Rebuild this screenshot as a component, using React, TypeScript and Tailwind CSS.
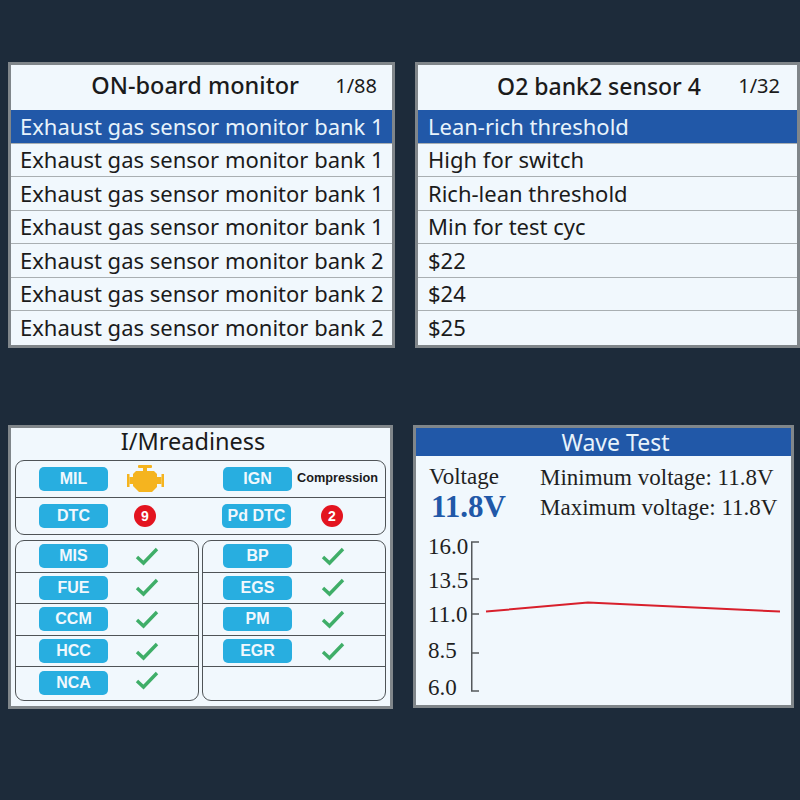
const monitorRows = ["Exhaust gas sensor monitor bank 1", "Exhaust gas sensor monitor bank 1", "Exhaust gas sensor monitor bank 1", "Exhaust gas sensor monitor bank 1", "Exhaust gas sensor monitor bank 2", "Exhaust gas sensor monitor bank 2", "Exhaust gas sensor monitor bank 2"];
const sensorRows = ["Lean-rich threshold", "High for switch", "Rich-lean threshold", "Min for test cyc", "$22", "$24", "$25"];
const leftChecks = ["MIS", "FUE", "CCM", "HCC", "NCA"];
const rightChecks = ["BP", "EGS", "PM", "EGR"];

// Axis labels aren't evenly spaced in the picture
const axisLabels = [
    { text: "16.0", height: "h-[33.5px]" },
    { text: "13.5", height: "h-[34.5px]" },
    { text: "11.0", height: "h-[36px]" },
    { text: "8.5", height: "h-[37px]" },
    { text: "6.0", height: "h-[23px]" },
];

type ListProps = {
    title: string,
    page: string,
    rows: string[],
    width: string,
    titleClass: string,
    pageClass: string,
    rowPad: string,
}

function ListPanel({ title, page, rows, width, titleClass, pageClass, rowPad }: ListProps) {
    return (
        <div className={`${width} h-[286px] shrink-0 border-[3px] border-[#80868a] bg-[#f1f8fd] text-[#1b1b1b]`}>
            <div className="h-[45px] pb-[3px] flex items-center">
                <div className={`${titleClass} text-right font-medium leading-none`}>{title}</div>
                <div className={`${pageClass} flex-1 text-right text-[20px] leading-none`}>{page}</div>
            </div>
            {rows.map((row, i) => (
                <div
                    key={i}
                    className={`${rowPad} h-[33.5px] pb-[1px] flex items-center text-[22px] leading-none whitespace-nowrap border-b border-[#a9afb2] last:border-b-0 ${i === 0 ? "bg-[#2158a8] text-[#e8f3fb]" : ""}`}
                >
                    {row}
                </div>
            ))}
        </div>
    )
}

function Pill({ label }: { label: string }) {
    return (
        <div className="w-[69px] h-[24px] shrink-0 rounded-[5px] bg-[#28aee0] text-[#f1f8fd] text-[16px] font-bold leading-none flex items-center justify-center font-['Liberation_Sans',sans-serif]">
            {label}
        </div>
    )
}

function Check() {
    return (
        <svg width="24" height="19" viewBox="0 0 24 19" className="shrink-0">
            <path d="M2 10 L8.5 16 L22 2" fill="none" stroke="#3fae68" strokeWidth="3.4" />
        </svg>
    )
}

function Engine() {
    return (
        <svg width="37" height="28" viewBox="0 0 37 28" fill="#f5b41f" className="shrink-0">
            <rect x="11" y="0" width="14" height="3" rx="1" />
            <rect x="16" y="3" width="4" height="4" />
            <path d="M9 6 H27 L30 9 V22 L25 27 H12 L6 21 V9 Z" />
            <rect x="0" y="9" width="2.5" height="13" />
            <rect x="2.5" y="12" width="4" height="7" />
            <rect x="30" y="12" width="4.5" height="7" />
            <rect x="34.5" y="9" width="2.5" height="13" />
        </svg>
    )
}

function Badge({ value }: { value: string }) {
    return (
        <div className="w-[22px] h-[22px] rounded-full bg-[#e3141f] text-white text-[14px] font-bold leading-none flex items-center justify-center font-['Liberation_Sans',sans-serif]">
            {value}
        </div>
    )
}

function CheckTable({ items, pad, gap }: { items: string[], pad: string, gap: string }) {
    return (
        <div className="w-[184px] h-[161px] rounded-[9px] border border-[#4f5457]">
            {[0, 1, 2, 3, 4].map((i) => (
                <div key={i} className={`${pad} h-[31.6px] flex items-center border-b border-[#4f5457] last:border-b-0`}>
                    {items[i] && <Pill label={items[i]} />}
                    {items[i] && <div className={`${gap} ${i === 4 ? "-mt-[6px]" : ""}`}><Check /></div>}
                </div>
            ))}
        </div>
    )
}

function ReadinessPanel() {
    return (
        <div className="w-[385px] h-[284px] shrink-0 border-[3px] border-[#80868a] bg-[#f1f8fd] px-[4px] text-[#1b1b1b]">
            <div className="h-[32px] pb-[5px] pr-[15px] flex items-center justify-center text-[23.5px] leading-none">I/Mreadiness</div>
            <div className="w-[371px] h-[75px] rounded-[9px] border border-[#4f5457] flex flex-col">
                <div className="h-[37px] flex items-center pl-[23px] border-b border-[#4f5457]">
                    <Pill label="MIL" />
                    <div className="w-[19px]" /><Engine />
                    <div className="w-[59px]" /><Pill label="IGN" />
                    <div className="ml-[5px] text-[12.7px] font-bold whitespace-nowrap font-['Liberation_Sans',sans-serif]">Compression</div>
                </div>
                <div className="flex-1 flex items-center pl-[23px]">
                    <Pill label="DTC" />
                    <div className="w-[26px]" /><Badge value="9" />
                    <div className="w-[66px]" /><Pill label="Pd DTC" />
                    <div className="w-[30px]" /><Badge value="2" />
                </div>
            </div>
            <div className="mt-[5px] flex gap-[3px]">
                <CheckTable items={leftChecks} pad="pl-[23px]" gap="ml-[27px]" />
                <CheckTable items={rightChecks} pad="pl-[20px]" gap="ml-[29px]" />
            </div>
        </div>
    )
}

function WavePanel() {
    return (
        <div className="w-[381px] h-[283px] shrink-0 border-[3px] border-[#80868a] bg-[#f1f8fd] text-[#1f1f1f] font-['Liberation_Serif',serif]">
            <div className="h-[28px] pl-[24px] bg-[#2158a8] text-[#e8f3fb] text-[23px] leading-none flex items-center justify-center font-['Noto_Sans',sans-serif]">Wave Test</div>
            <div className="h-[60px] pt-[7px] pl-[13px] flex">
                <div className="w-[111px]">
                    <div className="text-[23px] leading-[28px]">Voltage</div>
                    <div className="text-[31px] leading-[32px] font-bold text-[#2158a8] pl-[2px]">11.8V</div>
                </div>
                <div className="text-[23px] leading-[30px] whitespace-nowrap">
                    <div>Minimum voltage: 11.8V</div>
                    <div>Maximum voltage: 11.8V</div>
                </div>
            </div>
            <div className="flex pl-[12px] mt-[16px]">
                <div className="w-[45px] pt-[3px] flex flex-col text-[23px] leading-none">
                    {axisLabels.map((v) => <div key={v.text} className={v.height}>{v.text}</div>)}
                </div>
                <svg width="320" height="165" viewBox="0 0 320 165" className="shrink-0">
                    <path d="M8 10 H0.75 V159 H8 M0.75 47 H8 M0.75 82 H8 M0.75 121 H8" fill="none" stroke="#55595c" strokeWidth="1.5" />
                    <path d="M15 79.5 L117 70.5 L309 79.5" fill="none" stroke="#d8202c" strokeWidth="2" />
                </svg>
            </div>
        </div>
    )
}

export default function App() {
    return (
        <div className="w-[800px] h-[800px] bg-[#1d2b3a] overflow-hidden pt-[62px] font-['Noto_Sans',sans-serif]">
            <div className="flex pl-[8px] gap-[20px]">
                <ListPanel title="ON-board monitor" page="1/88" rows={monitorRows} width="w-[387px]" titleClass="w-[288px] text-[23.5px]" pageClass="pr-[15px]" rowPad="pl-[9px]" />
                <ListPanel title="O2 bank2 sensor 4" page="1/32" rows={sensorRows} width="w-[385px]" titleClass="w-[283px] text-[23px]" pageClass="pr-[17px]" rowPad="pl-[10px]" />
            </div>
            <div className="flex pl-[8px] gap-[20px] mt-[77px]">
                <ReadinessPanel />
                <WavePanel />
            </div>
        </div>
    )
}
